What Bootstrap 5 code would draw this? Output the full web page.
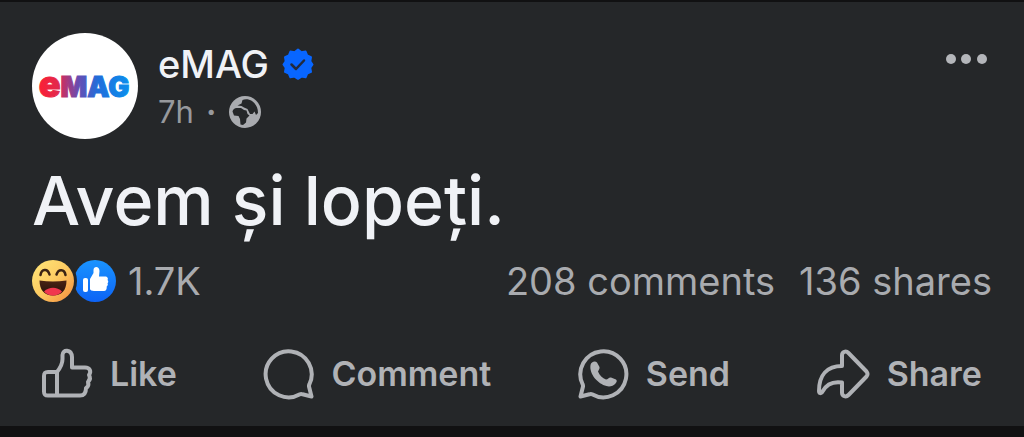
<!DOCTYPE html>
<html lang="ro" data-bs-theme="dark">
<head>
<meta charset="utf-8">
<meta name="viewport" content="width=device-width, initial-scale=1">
<title>eMAG</title>
<link href="https://cdn.jsdelivr.net/npm/bootstrap@5.3.0/dist/css/bootstrap.min.css" rel="stylesheet">
<style>
  body { background: #111112; font-family: Inter, "Liberation Sans", sans-serif; color: #f0f2f6; }
  .post { background: #252729; margin-top: 2px; padding: 31px 32px 26px; }
  .avatar { width: 106px; height: 106px; background: #fff; }
  .byline { padding-left: 20px; }
  .author { font-size: 38px; line-height: 46px; font-weight: 500; }
  .author a { color: inherit; }
  .meta { font-size: 31px; line-height: 42px; color: #97999d; }
  .message { font-size: 68px; line-height: 88px; font-weight: 500; margin-top: 17px; }
  .counts { font-size: 38px; line-height: 46px; margin-top: 14px; }
  .counts a { color: #a9abaf; }
  .actions { margin-top: 44px; padding: 0 10px; }
  .action { font-size: 34px; line-height: 52px; font-weight: 600; color: #b0b2b6; background: none; }
  .icon-line { fill: none; stroke: #b0b2b6; stroke-width: 4; stroke-linejoin: round; stroke-linecap: round; }
  svg { display: block; flex: none; }
</style>
</head>
<body>
<article class="post">
  <header class="d-flex align-items-start">
    <div class="avatar rounded-circle d-flex align-items-center justify-content-center flex-shrink-0">
      <svg width="96" height="60" viewBox="0 0 96 60" role="img" aria-label="eMAG">
        <defs>
          <linearGradient id="brand" gradientUnits="userSpaceOnUse" x1="2" y1="0" x2="94" y2="0">
            <stop offset="0" stop-color="#fb1f35"/><stop offset=".2" stop-color="#e3284c"/>
            <stop offset=".42" stop-color="#6a4bb0"/><stop offset=".65" stop-color="#1f6fdc"/><stop offset="1" stop-color="#0a90ee"/>
          </linearGradient>
        </defs>
        <text x="47" y="41" text-anchor="middle" fill="url(#brand)" stroke="url(#brand)" stroke-width="1" font-family="Inter, sans-serif" font-weight="900" font-size="28"><tspan font-size="36">e</tspan>MAG</text>
      </svg>
    </div>
    <div class="byline flex-grow-1">
      <div class="author d-flex align-items-center gap-2 mt-2">
        <a href="#" class="text-decoration-none pe-1">eMAG</a>
        <svg width="34" height="34" viewBox="0 0 34 34" role="img" aria-label="Verified">
          <path fill="#0866ff" stroke="#0866ff" stroke-width="2" stroke-linejoin="round" d="M17 2.500L20.400 5.200 24.600 4.500 26.200 8.500 30 10.200 29.300 14.300 31.500 17.500 29.300 20.800 30 24.800 26.200 26.500 24.600 30.300 20.400 29.600 17 31.800 13.600 29.600 9.400 30.300 7.800 26.500 4 24.800 4.700 20.800 2.500 17.500 4.700 14.300 4 10.200 7.800 8.500 9.400 4.500 13.600 5.200Z"/>
          <path fill="none" stroke="#222a3c" stroke-width="2.500" stroke-linecap="round" stroke-linejoin="round" d="M10.500 17.500l4.500 4.500 8-8.500"/>
        </svg>
      </div>
      <div class="meta d-flex align-items-center mt-1">
        <span>7h</span><span class="fw-bold px-2 mx-1">·</span>
        <svg width="34" height="34" viewBox="0 0 34 34" role="img" aria-label="Public">
          <circle cx="17" cy="17" r="16" fill="#a9abaf"/>
          <path fill="#252729" d="M4.500 16.500C5 14 7 12.800 9 13L13 13 16 15 18.500 15.500 19.500 19 21.500 20.500 18.500 23.500 18 27.500 15 30 12.500 29.500 12 24 10.500 21 6 20.500Z"/>
          <path fill="#252729" d="M14.500 5C17 3.800 21 4 24 6 28 9 30 13 30 18L28 20 26.500 16.500 24.500 19 22 19 19.500 14 16 12.500 13.500 11 9.500 10.500 13.500 8.500Z"/>
        </svg>
      </div>
    </div>
    <button type="button" class="btn p-0 border-0 mt-3" aria-label="More options">
      <svg width="46" height="20" viewBox="0 0 46 20" fill="#b4b6ba"><circle cx="5" cy="10" r="5"/><circle cx="20" cy="10" r="5"/><circle cx="36" cy="10" r="5"/></svg>
    </button>
  </header>

  <p class="message mb-0">Avem și lopeți.</p>

  <div class="counts d-flex align-items-center">
    <a href="#" class="d-flex align-items-center text-decoration-none me-auto">
      <svg width="84" height="44" viewBox="0 0 84 44" role="img" aria-label="Haha, Like">
        <defs>
          <linearGradient id="face" x1="0" y1="0" x2="1" y2="1"><stop offset="0" stop-color="#ffe779"/><stop offset=".5" stop-color="#fdcb62"/><stop offset="1" stop-color="#f38a3c"/></linearGradient>
          <linearGradient id="blue" x1="0" y1="0" x2="0" y2="1"><stop offset="0" stop-color="#1a94ff"/><stop offset="1" stop-color="#0d63f5"/></linearGradient>
          <linearGradient id="mouth" x1="0" y1="0" x2="0" y2="1"><stop offset="0" stop-color="#4a2414"/><stop offset="1" stop-color="#24100c"/></linearGradient>
        </defs>
        <circle cx="63" cy="22" r="21" fill="url(#blue)"/>
        <circle cx="21" cy="22" r="24" fill="#252729"/>
        <circle cx="21" cy="22" r="21" fill="url(#face)"/>
        <path d="M8.500 16c1-6 7-7 9-.5M24.500 15.500c2-6 8-5.500 9 .5" fill="none" stroke="#3b2314" stroke-width="2.500" stroke-linecap="round"/>
        <path d="M7.500 21.500q13.500 2 27 0c0 10-5 15-13.500 15S7.500 31 7.500 21.500Z" fill="url(#mouth)"/>
        <path d="M12 32.500c5-5 13-5 18 0-4 5.500-14 5.500-18 0Z" fill="#f0364e"/>
        <rect x="51" y="19" width="5" height="14" rx="2" fill="#fff"/>
        <path fill="#fff" d="M58 20l3.500-6v-3c0-4 6-4 6 1l-.5 5.500H73c2.500 0 3.500 2 2.500 3.500 1 1 1 2.500 0 3.300.7 1.200.3 2.500-.8 3.200.3 2.500-.7 4.500-2.700 4.500H62c-2 0-4-1-4-2Z"/>
      </svg>
      <span class="ps-2 ms-1">1.7K</span>
    </a>
    <a href="#" class="text-decoration-none">208 comments</a>
    <a href="#" class="text-decoration-none ps-4">136 shares</a>
  </div>

  <div class="actions d-flex justify-content-between">
    <button type="button" class="action border-0 p-0 d-flex align-items-center gap-3">
      <svg class="icon-line" width="52" height="52" viewBox="0 0 52 52"><path d="M15 24C19 19 20.500 16 20.500 11V7c0-6 9-6 9.500 2v10.500h13c5 0 6.500 4 4 7.500 2 3 1 5-1 7 1 3 0 5-2 6 0 5-2 7.500-6 7.500H6c-3 0-4-1-4-4V28c0-3 1-4 4-4h9v23.500"/></svg>
      <span>Like</span>
    </button>
    <button type="button" class="action border-0 p-0 d-flex align-items-center gap-3">
      <svg class="icon-line" width="52" height="52" viewBox="0 0 52 52"><path d="M46.500 36A23 23 0 1 0 37 46.300Q38 45.800 39.500 46.300L48.500 48.500 46 38.500Q45.800 37.300 46.500 36Z"/></svg>
      <span>Comment</span>
    </button>
    <button type="button" class="action border-0 p-0 d-flex align-items-center gap-3">
      <svg class="icon-line" width="52" height="52" viewBox="0 0 52 52"><path d="M4.500 36A23 23 0 1 1 14 46.300Q13 45.800 11.500 46.300L2.500 48.500 5 38.500Q5.200 37.300 4.500 36Z"/><path fill="#b0b2b6" stroke="none" d="M12.500 17C13 14 17 12.500 19 14.500l2.500 4.500c.5 1.500-1 3-1.500 4.500 1.500 4 4.500 6.500 8 8 2 0 3-2.500 5-2l5 2c1.500 1 .5 3-.5 4-2 2.500-6 3.500-9 2.500C20 36 11 26 12.500 17Z"/></svg>
      <span>Send</span>
    </button>
    <button type="button" class="action border-0 p-0 d-flex align-items-center gap-3">
      <svg class="icon-line" width="54" height="52" viewBox="0 0 54 52"><path d="M25 18V7.500c0-4 4-5 6.500-2.500L49.500 23.500q2 2.500 0 5L31.500 47C29 49.500 25 48.500 25 44.500V34.500C15 33 9 37 5.500 43.500 4.500 46 2 45.500 2 43 2 27 10 18 25 18Z"/></svg>
      <span>Share</span>
    </button>
  </div>
</article>
<script src="https://cdn.jsdelivr.net/npm/bootstrap@5.3.0/dist/js/bootstrap.bundle.min.js"></script>
</body>
</html>
